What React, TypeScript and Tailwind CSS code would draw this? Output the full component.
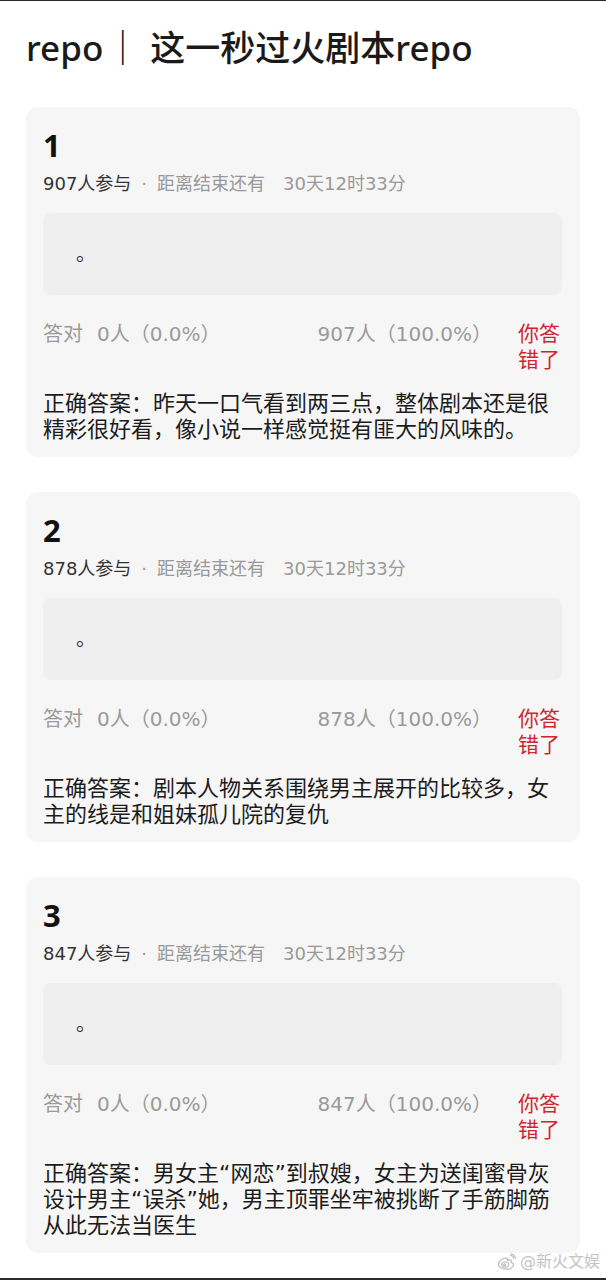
import React from "react";

type Quiz = {
  index: number;
  joined: number;
  option: string;
  right: string;
  wrong: string;
  answer: string;
};

const quizzes: Quiz[] = [
  {
    index: 1,
    joined: 907,
    option: "。",
    right: "0人（0.0%）",
    wrong: "907人（100.0%）",
    answer: "正确答案：昨天一口气看到两三点，整体剧本还是很精彩很好看，像小说一样感觉挺有匪大的风味的。",
  },
  {
    index: 2,
    joined: 878,
    option: "。",
    right: "0人（0.0%）",
    wrong: "878人（100.0%）",
    answer: "正确答案：剧本人物关系围绕男主展开的比较多，女主的线是和姐妹孤儿院的复仇",
  },
  {
    index: 3,
    joined: 847,
    option: "。",
    right: "0人（0.0%）",
    wrong: "847人（100.0%）",
    answer:
      "正确答案：男女主“网恋”到叔嫂，女主为送闺蜜骨灰设计男主“误杀”她，男主顶罪坐牢被挑断了手筋脚筋从此无法当医生",
  },
];

function QuizCard({ quiz }: { quiz: Quiz }) {
  return (
    <div className="rounded-[12px] bg-[#f6f6f6] pl-[17px] pr-[18px] pt-[20px] pb-[14px]">
      <div className="font-['Noto_Sans'] text-[31px] font-bold leading-[36px] text-[#111]">{quiz.index}</div>
      <div className="mt-[8px] text-[18px] leading-[26px]">
        <span className="text-[#333]">{quiz.joined}人参与</span>
        <span className="mx-[10px] text-[#999]">·</span>
        <span className="text-[#999]">距离结束还有</span>
        <span className="ml-[18px] text-[#999]">30天12时33分</span>
      </div>
      <div className="mt-[16px] flex h-[82px] items-center rounded-[8px] bg-[#efefef] px-[33px] text-[20px] text-[#333]">
        {quiz.option}
      </div>
      <div className="mt-[26px] flex items-start text-[20px] leading-[26px] text-[#9a9a9a]">
        <div className="flex-1">
          答对<span className="ml-[14px]">{quiz.right}</span>
        </div>
        <div>{quiz.wrong}</div>
        <div className="ml-[26px] w-[44px] text-[21px] text-[#d0252f]">你答错了</div>
      </div>
      <p className="mt-[18px] pr-[10px] text-[22px] leading-[26px] text-[#1c1c1c]">{quiz.answer}</p>
    </div>
  );
}

function WeiboMark() {
  return (
    <svg width="20" height="18" viewBox="0 0 20 18" fill="none" stroke="#bdbdbd" strokeWidth="1.2">
      <path d="M8.5 5.2c-3.6.4-7 3-7 6 0 3 3.6 5 7.6 5s7.4-2 7.4-4.4c0-1.6-1.6-2.2-2.4-2.4.6-1.2.4-2.6-1.4-2.6-1 0-2.2.6-2.2.6s.6-2.4-2-2.2z" />
      <ellipse cx="8.2" cy="11.6" rx="3.6" ry="2.6" />
      <circle cx="7.6" cy="11.8" r="1" />
      <path d="M13.2 2.4c1.8 0 3.4 1.4 3.4 3.4M13.4 0.8c2.8 0 5 2.2 5 5" />
    </svg>
  );
}

export default function App() {
  return (
    <div
      className="relative flex h-[1280px] w-[606px] flex-col overflow-hidden bg-white"
      style={{ fontFamily: '"DejaVu Sans", "Noto Sans CJK SC", sans-serif' }}
    >
      <div className="h-px bg-[#2a2a2a]" />
      <div className="flex-1 px-[26px] pt-[27px]">
        <h1 className="font-['Noto_Sans','Noto_Sans_CJK_SC',sans-serif] text-[35px] font-medium leading-[40px] text-[#1a1a1a]">
          repo<span className="ml-[2px] mr-[10px]">｜</span>这一秒过火剧本repo
        </h1>
        <div className="mt-[39px] flex flex-col gap-[35px]">
          {quizzes.map((q) => (
            <QuizCard key={q.index} quiz={q} />
          ))}
        </div>
      </div>
      <div className="h-[2px] bg-[#2a2a2a]" />
      <div className="absolute bottom-[6px] right-[6px] flex items-center gap-[3px] text-[16px] text-[#c4c4c4]">
        <WeiboMark />
        <span>@新火文娱</span>
      </div>
    </div>
  );
}
